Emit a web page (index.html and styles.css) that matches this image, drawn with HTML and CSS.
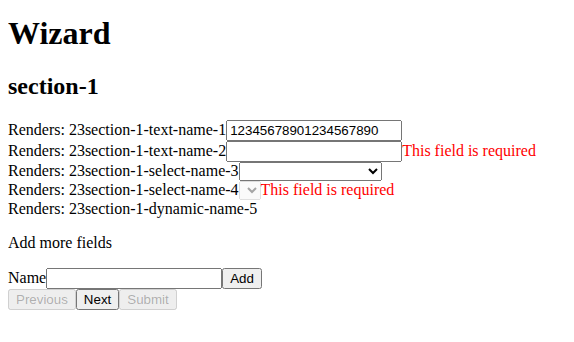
FILE: index.html
```html
<!DOCTYPE html>
<html lang="en">

<head>
    <meta charset="UTF-8">
    <meta name="viewport" content="width=device-width, initial-scale=1.0">
    <title>Wizard</title>
    <link rel="stylesheet" href="styles.css">
</head>

<body>
    <h1>Wizard</h1>

    <form class="wizard">
        <h2>section-1</h2>

        <div class="field">
            Renders: 23section-1-text-name-1<input type="text" value="12345678901234567890">
        </div>
        <div class="field">
            Renders: 23section-1-text-name-2<input type="text"><span class="error">This field is required</span>
        </div>
        <div class="field">
            Renders: 23section-1-select-name-3<select class="wide-select">
                <option value=""></option>
            </select>
        </div>
        <div class="field">
            Renders: 23section-1-select-name-4<select disabled></select><span class="error">This field is required</span>
        </div>
        <div class="field">
            Renders: 23section-1-dynamic-name-5
        </div>

        <p>Add more fields</p>

        <div class="add-row">
            <label>Name<input type="text"></label><button type="button">Add</button>
        </div>

        <div class="nav-buttons">
            <button type="button" disabled>Previous</button><button type="button">Next</button><button type="submit" disabled>Submit</button>
        </div>
    </form>
</body>

</html>
```

FILE: styles.css
```css
body {
    margin: 0 8px 8px;
    font-family: "Liberation Serif", "Times New Roman", serif;
    color: black;
    background-color: white;
}

h1 {
    margin-top: 15px;
}

input,
select,
button {
    font-family: "Liberation Sans", Arial, sans-serif;
    font-size: 13.333px;
}

input[type="text"] {
    box-sizing: border-box;
    width: 176px;
    height: 21px;
}

.wide-select {
    width: 143px;
}

.error {
    color: red;
}
```
